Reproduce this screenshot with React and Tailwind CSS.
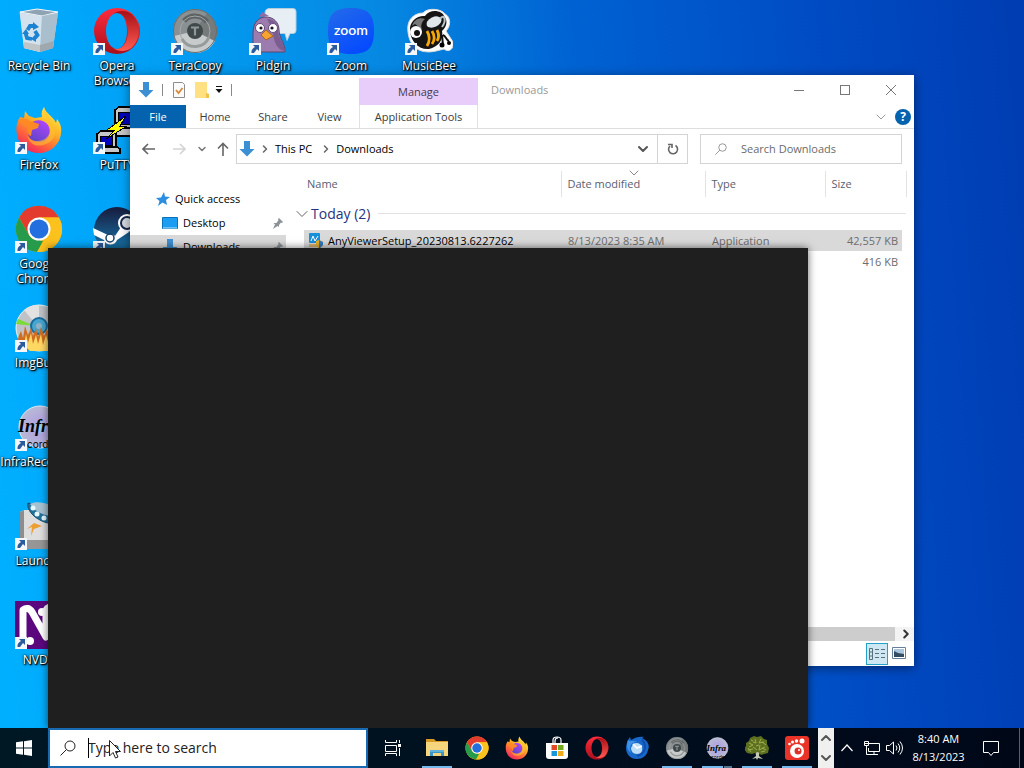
import { ChevronDown, ChevronRight, ChevronUp } from 'lucide-react';

/* ---------- App icons (48 x 48 grid) ---------- */

const RecycleBinIcon = () => (
  <svg viewBox="0 0 48 48" className="w-full h-full">
    <path d="M4.500 5 22 2 43 5 38 41 25 45 9 41Z" fill="#c3d3de" />
    <path d="M5 5 22 2 43 5 27 9Z" fill="#8fa4b3" stroke="#eef5f9" strokeWidth="1" />
    <path d="M5 6 27 9 25 45 9 41Z" fill="#d3e2ec" />
    <path d="M27 9 43 6 38 41 25 45Z" fill="#a9bfcd" />
    <path d="M9 35 25 38 25 45 9 41Z" fill="#c0c6c8" />
    <path d="M25 38 39 34 38 41 25 45Z" fill="#9fa8ae" />
    <g fill="none" stroke="#1b83d2" strokeWidth="3.800">
      <path d="M12.500 23 15 19 20 19" />
      <path d="M20 31 22.500 28 20 24" />
      <path d="M10.500 26 12 31 17 32" />
    </g>
    <g fill="#1b83d2">
      <path d="m18 15 6 5-6 3Z" />
      <path d="m21 27-5 5 5 3Z" />
      <path d="m7 27 4-5 3 5Z" />
    </g>
  </svg>
);

const OperaIcon = () => (
  <svg viewBox="0 0 48 48" className="w-full h-full">
    <defs>
      <linearGradient id="operaOuter" x1="0" y1="0" x2="0" y2="1">
        <stop offset="0" stopColor="#ff2b3c" />
        <stop offset="1" stopColor="#a90f1c" />
      </linearGradient>
      <linearGradient id="operaInner" x1="0" y1="0" x2="0" y2="1">
        <stop offset="0" stopColor="#a80f16" />
        <stop offset="1" stopColor="#ff5b52" />
      </linearGradient>
    </defs>
    <path fillRule="evenodd" fill="url(#operaOuter)" d="M24 1a23 23 0 1 0 0 46 23 23 0 0 0 0-46Zm0 5c6 0 10 8 10 18s-4 18-10 18-11-8-11-18S18 6 24 6Z" />
    <path fill="url(#operaInner)" d="M20 7C25 3 34 3 39 7.500a23 23 0 0 1 0 33C34 45 25 45 20 41c9 4 15-6 15-17S29 3 20 7Z" />
  </svg>
);

const TeraCopyIcon = () => (
  <svg viewBox="0 0 48 48" className="w-full h-full">
    <circle cx="24" cy="24" r="22" fill="#8b9092" />
    <path d="M24 24 3 29A22 22 0 0 0 44 34Z" fill="#c8cbcb" />
    <path d="M24 24 44 34A22 22 0 0 0 36 6Z" fill="#757a7b" />
    <circle cx="24" cy="24" r="21.500" fill="none" stroke="#676d6e" strokeWidth="1" />
    <path d="M13 14A15 15 0 0 1 36 15" fill="none" stroke="#5c6263" strokeWidth="5" />
    <circle cx="24" cy="24" r="15" fill="none" stroke="#a4a8a7" strokeWidth="1" />
    <path d="M11 32A15 15 0 0 0 38 30" fill="none" stroke="#969b9b" strokeWidth="3" />
    <circle cx="24" cy="24" r="8" fill="#404849" />
    <path d="M20 20.500h8M24 20.500v8" stroke="#8e9897" strokeWidth="2.200" />
  </svg>
);

const PidginIcon = () => (
  <svg viewBox="0 0 48 48" className="w-full h-full">
    <path d="M21 1.500h23q3 0 3 3v19q0 3-3 3h-3l-3 7-2-7H20q-4 0-4-4V6q0-4.500 5-4.500Z" fill="#e8eff4" stroke="#b6cddd" />
    <path d="M4 45V26C4 15 10 10 17 10s13 5 13 13c0 8 7 15 6 22Z" fill="#9c7cae" stroke="#61456f" />
    <path d="M18 12c8 0 11 5 11 12s8 14 6 20c-8-2-11-12-11-20Z" fill="#7b5d91" />
    <path d="m10 10 3-5 7 4Z" fill="#8f6da3" />
    <g fill="#fff" stroke="#674a79">
      <circle cx="11" cy="21" r="4.500" />
      <circle cx="24" cy="21" r="4.500" />
    </g>
    <circle cx="12" cy="21" r="1.600" fill="#1c1523" />
    <circle cx="23" cy="21" r="1.600" fill="#1c1523" />
    <path d="m17 23-5 5 5 5 7-4Z" fill="#f5a433" stroke="#a96516" />
  </svg>
);

const ZoomIcon = () => (
  <svg viewBox="0 0 48 48" className="w-full h-full">
    <defs>
      <linearGradient id="zoomBg" x1="0" y1="0" x2="0.600" y2="1">
        <stop offset="0" stopColor="#246be8" />
        <stop offset="1" stopColor="#064bff" />
      </linearGradient>
    </defs>
    <path d="M24 1C41 1 47 7 47 24S41 47 24 47 1 41 1 24 7 1 24 1Z" fill="url(#zoomBg)" />
    <text x="24" y="28" textAnchor="middle" fontSize="14" fontWeight="600" fill="#fff" fontFamily="Lato, sans-serif">zoom</text>
  </svg>
);

const MusicBeeIcon = () => (
  <svg viewBox="0 0 48 48" className="w-full h-full">
    <path d="M3 25C1 12 10 6 18 6 23 0 37 2 40 7c6 3 6 12 1 17l7 11c1 7-4 11-9 7l-8 2c-13 3-26-1-28-19Z" fill="#fff" stroke="#ddd" />
    <path d="M5 24C4 14 13 8 20 9c5-8 18-5 19 0 4 4 3 11-2 15 2 9-4 16-13 18-10 1-18-7-19-18Z" fill="#151515" />
    <path d="M7 19C9 12 15 10 20 12c-4 3-5 9-2 11L10 17Z" fill="#777" />
    <g stroke="#f8a806" strokeWidth="2.800" fill="none">
      <path d="M22 24c3 5 3 10 0 15" />
      <path d="M27 24c3 5 3 9 0 13" />
      <path d="M32 23c2 4 2 8 0 11" />
    </g>
    <ellipse cx="29" cy="15" rx="8" ry="5" transform="rotate(-25 29 15)" fill="#dfe7eb" />
    <path d="M35 12c4-6 7 1 2 8" fill="none" stroke="#bac4c8" strokeWidth="2" />
    <circle cx="11" cy="25" r="6" fill="#fff" />
    <circle cx="12" cy="26" r="3" fill="#111" />
    <path d="m37 28 1 10M38 28c3 1 3 5 6 6" stroke="#111" strokeWidth="2" fill="none" />
    <circle cx="37" cy="38" r="2.500" />
    <circle cx="44" cy="36" r="2" />
  </svg>
);

const FirefoxIcon = () => (
  <svg viewBox="0 0 48 48" className="w-full h-full">
    <defs>
      <linearGradient id="foxBody" x1="0.800" y1="0" x2="0.200" y2="1">
        <stop offset="0" stopColor="#fff34a" />
        <stop offset="0.400" stopColor="#ffae24" />
        <stop offset="0.700" stopColor="#ff613c" />
        <stop offset="1" stopColor="#ed1b68" />
      </linearGradient>
      <linearGradient id="foxGlobe" x1="0.800" y1="0" x2="0.200" y2="1">
        <stop offset="0" stopColor="#b244ff" />
        <stop offset="1" stopColor="#5b46c4" />
      </linearGradient>
    </defs>
    <path d="M29 1c-2 3-3 6-2 10l-7 1-6-2-4-5-1 7-4-1C1 17 1 23 2 29c2 11 11 18 22 18s21-8 22-20c1-6-1-10-4-14l-1 4C38 10 31 8 29 1Z" fill="url(#foxBody)" />
    <path d="M15 18c5-6 16-5 19 3 3 9-3 15-10 15s-12-5-11-12l5-3Z" fill="url(#foxGlobe)" />
    <path d="M4 12c4 2 7 0 11 3l9 3-1 4-6 2-1 6c-4-1-4-6-2-9C9 17 6 20 4 12Z" fill="#ff8a24" />
    <path d="M29 1c-2 9 8 13 6 24-1 6-6 10-13 10-5 0-8-2-10-6 2 9 9 12 16 10 9-2 15-10 11-20C37 11 31 9 29 1Z" fill="#ffc232" opacity="0.600" />
  </svg>
);

const PuttyIcon = () => (
  <svg viewBox="0 0 48 48" className="w-full h-full" shapeRendering="crispEdges">
    <g fill="#c7c7c7" stroke="#000" strokeWidth="1.500">
      <path d="M22 4 26 1h20v17l-4 4H22Z" />
      <path d="M19 22h25l3 3v5H19Z" />
      <path d="m4 28 4-3h15v15l-3 3H4Z" />
      <path d="M2 41h22l3 2v4H2Z" />
    </g>
    <g fill="#0000bd" stroke="#000">
      <path d="M25 6h16v12H25Z" />
      <path d="M7 30h12v9H7Z" />
    </g>
    <path d="m33 10-19 14h8l-9 9 21-13h-7Z" fill="#ff0" stroke="#000" strokeWidth="1" />
  </svg>
);

const ChromeIcon = () => (
  <svg viewBox="0 0 48 48" className="w-full h-full">
    <circle cx="24" cy="24" r="23" fill="#fbbd13" />
    <path d="M4 12.500A23 23 0 0 1 44 12.500H24L14 30Z" fill="#e33b2e" />
    <path d="M4 12.500 14 30q4 6 10 5l4 1-6 11A23 23 0 0 1 4 12.500Z" fill="#269b4b" />
    <path d="M24 12.500h20A23 23 0 0 1 22 47l12-17q5-11-10-17.500Z" fill="#fbc11d" />
    <circle cx="24" cy="24" r="11.500" fill="#fff" />
    <circle cx="24" cy="24" r="9.500" fill="#246fe0" />
  </svg>
);

const SteamIcon = () => (
  <svg viewBox="0 0 48 48" className="w-full h-full">
    <defs>
      <linearGradient id="steamBg" x1="0" y1="0" x2="0" y2="1">
        <stop offset="0" stopColor="#171b3d" />
        <stop offset="1" stopColor="#177eb5" />
      </linearGradient>
    </defs>
    <circle cx="24" cy="25" r="23" fill="url(#steamBg)" />
    <path d="m0 23 15 7c3-1 5-1 7 1l6-9 8 5-12 8c-2 6-11 6-13 0L1 30Z" fill="#fff" />
    <circle cx="34" cy="18" r="9" fill="#fff" />
    <circle cx="34" cy="18" r="6" fill="#d8dce2" stroke="#17274d" strokeWidth="2" />
    <circle cx="17" cy="33" r="4" fill="none" stroke="#17416a" strokeWidth="1.500" />
  </svg>
);

const ImgBurnIcon = () => (
  <svg viewBox="0 0 48 48" className="w-full h-full">
    <circle cx="24" cy="24" r="23" fill="#bfc3c7" stroke="#f3f3f3" />
    <path d="M24 24 9 6A23 23 0 0 1 24 1Z" fill="#e2e2e2" />
    <path d="M20 22 1 20a23 23 0 0 1 2-5Z" fill="#7bdb37" />
    <circle cx="24" cy="22" r="8" fill="#47a5d0" stroke="#176b9d" strokeWidth="2" />
    <circle cx="24" cy="22" r="3" fill="#8db4c6" />
    <path d="M3 38c0-7 2-8 3-11l2 7 2-12 3 9 3-7 2 8 3-8 2 9 3-10 3 9 3-7 3 7 3-8 3 8 4-6v11Q34 47 24 47 10 48 3 38Z" fill="#cf6c20" />
    <path d="m9 41 2-11 2 9 3-10 2 11 3-9 2 9 3-10 2 11 3-10 3 10 3-8 3 8-7 6H15Z" fill="#ffd864" />
  </svg>
);

const InfraIcon = () => (
  <svg viewBox="0 0 48 48" className="w-full h-full">
    <defs>
      <radialGradient id="infraDisc">
        <stop offset="0" stopColor="#85e1f2" />
        <stop offset="0.350" stopColor="#b2a6df" />
        <stop offset="1" stopColor="#b8bad5" />
      </radialGradient>
    </defs>
    <circle cx="25" cy="24" r="21" fill="url(#infraDisc)" stroke="#e4e4ef" />
    <text x="3" y="29" fontSize="18" fontStyle="italic" fontWeight="700" fontFamily="'Liberation Serif', serif">Infra</text>
    <text x="12" y="45" fontSize="10" fontFamily="Inter, sans-serif">corder</text>
  </svg>
);

const LaunchyIcon = () => (
  <svg viewBox="0 0 48 48" className="w-full h-full">
    <path d="M5 10 9 8h39v30H5Z" fill="#dedede" />
    <path d="M5 10 9 8v30l-4 4Z" fill="#8d8d8d" />
    <path d="M5 38h43v9H5Z" fill="#969696" />
    <path d="M13 1c-2 9 12 23 34 21V12Z" fill="#23719b" stroke="#164c6b" />
    <path d="M15 2C22-3 44 3 44 13 31 16 20 10 15 2Z" fill="#a7c3d1" />
    <g fill="#e7fbff">
      <circle cx="18" cy="6" r="2.500" />
      <circle cx="22" cy="12" r="2.500" />
      <circle cx="29" cy="16" r="2.500" />
    </g>
    <path d="m19 21 8 3-8 3-3 7 1-9-5 2Z" fill="#ec9f32" />
  </svg>
);

const NvdaIcon = () => (
  <svg viewBox="0 0 48 48" className="w-full h-full">
    <path d="M0 0h48v48H0Z" fill="#5b087f" />
    <path d="M8 43V9q5-4 9 2l14 25V11q0-5 6-5" fill="none" stroke="#fff" strokeWidth="7" strokeLinecap="round" strokeLinejoin="round" />
    <circle cx="27" cy="11" r="4" fill="#fff" />
    <circle cx="15" cy="40" r="4" fill="#fff" />
  </svg>
);

const FolderIcon = () => (
  <svg viewBox="0 0 24 24" className="w-full h-full">
    <path d="M1 3h8l2 2h12v4H1Z" fill="#d79b24" />
    <path d="M1 6h22v14H1Z" fill="#f5d67c" />
    <path d="M5 14h14v6h-3v-3H8v3H5Z" fill="#3d94c9" />
    <path d="M5 14h14v2H5Z" fill="#62b2d9" />
  </svg>
);

const StoreIcon = () => (
  <svg viewBox="0 0 24 24" className="w-full h-full">
    <path d="M8 7V4q0-3 4-3t4 3v3M10 7V5q0-3 3-3" fill="none" stroke="#fff" strokeWidth="1.200" />
    <path d="M1 7h22v13q0 3-3 3H4q-3 0-3-3Z" fill="#fff" />
    <path d="M6.500 9H12v5H6.500Z" fill="#e04a28" />
    <path d="M13 9h5.500v5H13Z" fill="#73a91e" />
    <path d="M6.500 15H12v5H6.500Z" fill="#1597d8" />
    <path d="M13 15h5.500v5H13Z" fill="#f2ac18" />
  </svg>
);

const ThunderbirdIcon = () => (
  <svg viewBox="0 0 24 24" className="w-full h-full">
    <path d="M3 4 5 1l1 3c4-3 10-4 13-3l-2 1c6 3 8 7 6 12-1 6-6 9-11 9C5 23 1 18 1 12c0-3 1-5 2-8Z" fill="#1868cb" />
    <path d="M3 4c2 2 6 0 9 2-7 0-8 6-6 11C2 14 1 9 3 4Z" fill="#3f93e6" />
    <path d="M8 8c3-2 8-1 9 3s-1 7-5 7-6-3-6-6Z" fill="#bcdcf8" />
    <path d="m8 8 4 4 5-2" fill="none" stroke="#fff" strokeWidth="1.500" />
    <path d="M17 4c5 5 4 14-5 16" fill="none" stroke="#0f4eac" strokeWidth="2" />
  </svg>
);

const TreeIcon = () => (
  <svg viewBox="0 0 24 24" className="w-full h-full">
    <path d="m10 12 1 8-4 3 4-1 1 2 1-2 5 1-4-3 1-8Z" fill="#c4c9b6" />
    <path d="M5 2 9 0l3 1 4-1 3 3 3 1v4l2 4-1 5-4 1-3 1-3-3-3 1-3 1-5-1-3-4 2-3L1 7l3-2Z" fill="#5d7020" />
    <path d="m4 7 4 2-4 2m6-8 1 4-3-1m8-3-2 4 5-1M8 11l4 3m3-5-1 5 6-3M3 14l5-1m8 3 4-1m-9-5 3-1M6 4l2 1m-5 7 3 4m11-4 4 2M17 6l4 3" fill="none" stroke="#a0ad4f" />
  </svg>
);

const GomIcon = () => (
  <svg viewBox="0 0 24 24" className="w-full h-full">
    <rect width="24" height="24" rx="3" fill="#e93329" />
    <g fill="#fff">
      <circle cx="12" cy="15" r="7" />
      <circle cx="4.500" cy="8" r="1.300" />
      <circle cx="7.500" cy="6" r="1.500" />
      <circle cx="11.500" cy="5" r="1.700" />
      <circle cx="17" cy="5" r="2.500" />
    </g>
    <circle cx="13" cy="15" r="3.500" fill="#dd3028" />
    <circle cx="14" cy="14" r="1" fill="#fff" />
  </svg>
);

const DownArrow = () => (
  <svg viewBox="0 0 16 16" className="w-4 h-4 shrink-0">
    <path d="M5 0h6v8h4.500L8 15.500.500 8H5Z" fill="#3c8fd3" />
  </svg>
);

const PinIcon = () => (
  <svg viewBox="0 0 12 12" className="w-3 h-3 shrink-0">
    <path d="m7 1 4 4-1 1-1-.500L7 8v2L5.500 9 1 12 3 7.500 1.500 6h3L6.500 3 6 2Z" fill="#8b9298" />
  </svg>
);

const SearchIcon = ({ className }) => (
  <svg viewBox="0 0 16 16" className={className} fill="none" stroke="currentColor">
    <circle cx="10" cy="6" r="5" />
    <path d="M6.500 9.500.500 15.500" />
  </svg>
);

/* ---------- Desktop ---------- */

const desktopColumns = [
  [
    { label: 'Recycle Bin', Icon: RecycleBinIcon, system: true },
    { label: 'Firefox', Icon: FirefoxIcon },
    { label: 'Google Chrome', Icon: ChromeIcon },
    { label: 'ImgBurn', Icon: ImgBurnIcon },
    { label: 'InfraRecorder', Icon: InfraIcon },
    { label: 'Launchy', Icon: LaunchyIcon },
    { label: 'NVDA', Icon: NvdaIcon },
  ],
  [
    { label: 'Opera Browser', Icon: OperaIcon },
    { label: 'PuTTY', Icon: PuttyIcon },
    { label: 'Steam', Icon: SteamIcon },
  ],
  [{ label: 'TeraCopy', Icon: TeraCopyIcon }],
  [{ label: 'Pidgin', Icon: PidginIcon }],
  [{ label: 'Zoom', Icon: ZoomIcon }],
  [{ label: 'MusicBee', Icon: MusicBeeIcon }],
];

const DesktopIcon = ({ label, Icon, system }) => (
  <button className="w-[78px] h-[99px] pt-[7px] flex flex-col items-center gap-[3px] shrink-0">
    <span className="relative w-12 h-12 block">
      <Icon />
      {!system && (
        <svg viewBox="0 0 12 12" className="absolute left-0 bottom-0 w-3 h-3">
          <path d="M0 0h12v12H0Z" fill="#f4f7fa" />
          <path d="M4 2h6v6L8 6 5 10H2.500C2 7 4 5 6 4Z" fill="#2c5a9e" />
        </svg>
      )}
    </span>
    <span className="text-white text-xs leading-[15px] text-center [text-shadow:1px_1px_1px_#000,1px_1px_3px_#000,0_0_2px_#000]">{label}</span>
  </button>
);

/* ---------- Explorer window ---------- */

const TitleBar = () => (
  <div className="flex h-[30px] items-stretch">
    <div className="flex w-[229px] items-center pl-2">
      <DownArrow />
      <span className="ml-2 h-3 w-px bg-[#8a8a8a]" />
      <button aria-label="Properties" className="ml-2">
        <svg viewBox="0 0 16 16" className="w-4 h-4">
          <path d="M2.500.500h9l2 2v13h-11Z" fill="#fbfbfb" stroke="#8d8d8d" />
          <path d="m5 8 2.500 3 4-5" fill="none" stroke="#d88a3b" strokeWidth="1.800" />
        </svg>
      </button>
      <button aria-label="New folder" className="ml-2">
        <svg viewBox="0 0 14 16" className="w-3.5 h-4">
          <path d="M0 0h12v11l2 1v4H0Z" fill="#ffe082" />
          <path d="M11 11v5h3v-4Z" fill="#f1c34c" />
        </svg>
      </button>
      <button aria-label="Customize toolbar" className="ml-[6px]">
        <svg viewBox="0 0 8 8" className="w-2 h-2">
          <path d="M1 0h6v1H1ZM.500 3h7L4 7Z" fill="#111" />
        </svg>
      </button>
      <span className="ml-2 h-3 w-px bg-[#8a8a8a]" />
    </div>
    <div className="mt-[3px] flex w-[119px] items-center justify-center bg-[#e8cdfa] text-[#443a4d]">Manage</div>
    <h1 className="flex flex-1 items-center pl-[13px] text-[#999]">Downloads</h1>
    <button aria-label="Minimize" className="flex w-[46px] items-center justify-center">
      <span className="h-px w-2.5 bg-[#777]" />
    </button>
    <button aria-label="Maximize" className="flex w-[46px] items-center justify-center">
      <span className="h-2.5 w-2.5 border border-[#777]" />
    </button>
    <button aria-label="Close" className="flex w-[46px] items-center justify-center">
      <svg viewBox="0 0 12 12" className="w-3 h-3" stroke="#777">
        <path d="m1 1 10 10M11 1 1 11" />
      </svg>
    </button>
  </div>
);

const RibbonTabs = () => (
  <div className="flex h-6 border-b border-[#dedede] text-[#3c3c3c]">
    <button className="w-14 bg-[#0562ae] text-white">File</button>
    <button className="w-[58px]">Home</button>
    <button className="w-[58px]">Share</button>
    <button className="w-[57px] pr-[2px]">View</button>
    <button className="w-[119px] border-x border-[#ead9f2] whitespace-nowrap">Application Tools</button>
    <div className="flex flex-1 items-center justify-end gap-[6px] pr-[3px]">
      <button aria-label="Expand the ribbon">
        <ChevronDown className="w-4 h-4 text-[#9a9a9a]" strokeWidth={1.5} />
      </button>
      <button aria-label="Help" className="h-4 w-4 rounded-full bg-[#0562ae] text-xs leading-4 font-bold text-white">?</button>
    </div>
  </div>
);

const AddressBar = () => (
  <div className="flex items-center pt-[5px] pr-3 pb-[5px]">
    <div className="flex w-[106px] items-center pl-3">
      <button aria-label="Back">
        <svg viewBox="0 0 14 12" className="w-3.5 h-3" fill="none" stroke="#666" strokeWidth="1.600">
          <path d="M13 6H1.500M6 1 1 6l5 5" />
        </svg>
      </button>
      <button aria-label="Forward" className="ml-4">
        <svg viewBox="0 0 14 12" className="w-3.5 h-3" fill="none" stroke="#d4d4d4" strokeWidth="1.600">
          <path d="M1 6h11.500M8 1l5 5-5 5" />
        </svg>
      </button>
      <button aria-label="Recent locations" className="ml-[10px]">
        <ChevronDown className="w-3 h-3 text-[#777]" strokeWidth={3} />
      </button>
      <button aria-label="Up" className="ml-[9px]">
        <svg viewBox="0 0 12 14" className="w-3 h-3.5" fill="none" stroke="#666" strokeWidth="1.600">
          <path d="M6 14V1.500M1 6.500l5-5 5 5" />
        </svg>
      </button>
    </div>
    <div className="flex h-[30px] flex-1 items-center border border-[#d4d4d4] pl-[2px] text-black">
      <DownArrow />
      <ChevronRight className="ml-1 w-3 h-3 text-[#666]" strokeWidth={3} />
      <button className="mx-1">This PC</button>
      <ChevronRight className="ml-1 w-3 h-3 text-[#666]" strokeWidth={3} />
      <button className="mx-1">Downloads</button>
      <button aria-label="Previous locations" className="ml-auto mr-[6px]">
        <ChevronDown className="w-4 h-4 text-[#555]" strokeWidth={3} />
      </button>
      <button aria-label="Refresh" className="flex h-full w-[30px] items-center justify-center border-l border-[#d4d4d4]">
        <svg viewBox="0 0 12 12" className="w-3 h-3" fill="none" stroke="#666" strokeWidth="1.600">
          <path d="M8.500 2.500A4.500 4.500 0 1 1 3 3" />
          <path d="M1 1.500h4V5" />
        </svg>
      </button>
    </div>
    <label className="ml-3 flex h-[30px] w-[202px] items-center border border-[#d4d4d4] pl-[14px]">
      <SearchIcon className="w-3 h-3 shrink-0 text-[#777]" />
      <input
        aria-label="Search Downloads"
        placeholder="Search Downloads"
        className="ml-[14px] min-w-0 flex-1 outline-none placeholder:text-[#6b6b6b]"
      />
    </label>
  </div>
);

const NavPane = () => (
  <nav className="w-[157px] shrink-0 pt-4 text-black">
    <a href="#quick" className="flex h-6 items-center gap-[5px] pl-[26px]">
      <svg viewBox="0 0 14 14" className="w-3.5 h-3.5">
        <path d="m8 0 1 4.500 5 .500-4 3 1 5-4.500-2.500L2 14l1.500-5L0 6l5-.500Z" fill="#2b8ee0" />
      </svg>
      Quick access
    </a>
    <a href="#desktop" className="flex h-6 items-center gap-[5px] pr-[3px] pl-8">
      <svg viewBox="0 0 16 12" className="w-4 h-3">
        <path d="M.500.500h15v11H.500Z" fill="#1c9df2" stroke="#0873bc" />
        <path d="M1 11h14" stroke="#b8e2ff" />
      </svg>
      <span className="flex-1">Desktop</span>
      <PinIcon />
    </a>
    <a href="#downloads" className="mr-px flex h-6 items-center gap-[5px] bg-[#d9d9d9] pr-[2px] pl-8">
      <DownArrow />
      <span className="flex-1">Downloads</span>
      <PinIcon />
    </a>
  </nav>
);

const files = [
  { name: 'AnyViewerSetup_20230813.6227262', date: '8/13/2023 8:35 AM', type: 'Application', size: '42,557 KB', selected: true },
  { name: '', date: '', type: '', size: '416 KB' },
];

const FileList = () => (
  <div className="flex-1 pl-[17px]">
    <table className="w-[602px] table-fixed border-collapse text-[#6d6d6d]">
      <colgroup>
        <col className="w-[257px]" />
        <col className="w-[144px]" />
        <col className="w-[120px]" />
        <col className="w-[77px]" />
        <col className="w-1" />
      </colgroup>
      <thead>
        <tr className="h-[26px] text-left text-[#5a6070]">
          <th className="pl-[3px] font-normal">Name</th>
          <th className="relative border-l border-[#e3e3e3] pl-[6px] font-normal">
            Date modified
            <ChevronDown className="absolute top-[-6px] left-16 w-4 h-4 text-[#888]" strokeWidth={1.5} />
          </th>
          <th className="border-l border-[#e3e3e3] pl-[6px] font-normal">Type</th>
          <th className="border-l border-[#e3e3e3] pl-[6px] font-normal">Size</th>
          <td className="border-r border-[#e3e3e3]" />
        </tr>
      </thead>
      <tbody>
        <tr className="h-[33px]">
          <th colSpan={5} className="p-0 text-left font-normal">
            <button className="flex w-full items-center text-sm text-[#263282]">
              <ChevronDown className="-ml-3 -mr-px w-5 h-5 text-[#666]" strokeWidth={1.2} />
              Today (2)
              <span className="ml-2 h-px flex-1 bg-[#e2e2e2]" />
            </button>
          </th>
        </tr>
        {files.map((file) => (
          <tr key={file.size} className="h-[21px]">
            <td className={file.selected ? 'bg-[#d9d9d9] p-0 text-black' : 'p-0'}>
              {file.name && (
                <div className="flex items-center gap-1 pl-1 whitespace-nowrap">
                  <svg viewBox="0 0 16 16" className="w-4 h-4 shrink-0">
                    <rect x="1" width="11" height="10" rx="1" fill="#168fdd" />
                    <path d="m3 8 2-5 2 5 3-5" fill="none" stroke="#fff" />
                    <path d="M1 11h10v3H1Z" fill="#d8b46c" />
                    <path d="m8 8 3-1 4 2v3l-4 4-3-4Z" fill="#e9af27" />
                    <path d="M11 7v9l4-4V9Z" fill="#3279bd" />
                  </svg>
                  {file.name}
                </div>
              )}
            </td>
            <td className={file.selected ? 'bg-[#d9d9d9] py-0 pl-[7px]' : 'py-0 pl-[7px]'}>{file.date}</td>
            <td className={file.selected ? 'bg-[#d9d9d9] py-0 pl-[7px]' : 'py-0 pl-[7px]'}>{file.type}</td>
            <td className={file.selected ? 'bg-[#d9d9d9] py-0 pr-1 text-right' : 'py-0 pr-1 text-right'}>{file.size}</td>
            <td />
          </tr>
        ))}
      </tbody>
    </table>
  </div>
);

const ExplorerWindow = () => (
  <section className="absolute top-[75px] left-[130px] flex h-[591px] w-[784px] flex-col bg-white text-[11px] leading-4 shadow-[0_2px_10px_rgba(0,0,0,0.45)]">
    <TitleBar />
    <RibbonTabs />
    <AddressBar />
    <div className="flex min-h-0 flex-1 pt-[2px]">
      <NavPane />
      <FileList />
    </div>
    <div className="flex h-[14px] items-center bg-[#f3f3f3] pl-[174px]">
      <div className="h-full flex-1 bg-[#cdcdcd]" />
      <button aria-label="Scroll right" className="flex w-[19px] justify-center">
        <ChevronRight className="ml-[2px] w-3.5 h-3.5 text-[#333]" strokeWidth={3.5} />
      </button>
    </div>
    <div className="flex h-[25px] items-start justify-end gap-1 pr-2 pt-[2px]">
      <button aria-label="Details view" className="flex h-[22px] w-[22px] items-center justify-center border border-[#26a0c8] bg-[#cde8f2]">
        <svg viewBox="0 0 18 14" className="w-[18px] h-3.5" fill="none" stroke="#5b707c">
          <path d="M1.500 1.500h3v11h-3ZM1 5h4M1 9h4" />
          <path d="M7 2.500h4m2 0h4M7 6.500h4m2 0h4M7 10.500h4m2 0h4" />
        </svg>
      </button>
      <button aria-label="Large icons view" className="mt-1 h-3">
        <svg viewBox="0 0 14 12" className="w-3.5 h-3">
          <path d="M.500.500h13v11H.500Z" fill="#fff" stroke="#667f9a" />
          <path d="M2 2h10v8H2Z" fill="#a9c6df" />
          <path d="m2 4 4 2 6 1v3H2Z" fill="#324c62" />
        </svg>
      </button>
    </div>
  </section>
);

/* ---------- Taskbar ---------- */

const pinnedApps = [
  { name: 'File Explorer', Icon: FolderIcon, running: true },
  { name: 'Chrome', Icon: ChromeIcon },
  { name: 'Firefox', Icon: FirefoxIcon },
  { name: 'Microsoft Store', Icon: StoreIcon },
  { name: 'Opera', Icon: OperaIcon },
  { name: 'Thunderbird', Icon: ThunderbirdIcon },
  { name: 'TeraCopy', Icon: TeraCopyIcon, running: true },
  { name: 'InfraRecorder', Icon: InfraIcon, running: true, stacked: true },
  { name: 'TreeSize', Icon: TreeIcon, running: true },
  { name: 'GOM Player', Icon: GomIcon, running: true },
];

const Taskbar = () => (
  <footer className="relative flex h-10 shrink-0 bg-linear-to-r from-[#001724] to-[#000818] text-white">
    <button aria-label="Start" className="flex w-12 items-center justify-center">
      <svg viewBox="0 0 16 16" className="w-4 h-4" fill="#fff">
        <path d="M0 2.300 7 1.300v6.200H0ZM8 1.200 16 0v7.500H8ZM0 8.500h7v6.200l-7-1ZM8 8.500h8V16l-8-1.200Z" />
      </svg>
    </button>
    <label className="relative flex w-80 items-center border-2 border-[#1769b0] bg-white pl-[10px] text-black">
      <SearchIcon className="w-4 h-4 shrink-0 text-[#222]" />
      <input
        aria-label="Type here to search"
        placeholder="Type here to search"
        className="ml-3 min-w-0 flex-1 text-sm outline-none placeholder:text-[#222]"
      />
      <span className="absolute left-[38px] top-2 h-5 w-px bg-black" />
      <svg viewBox="0 0 12 19" className="absolute top-[10px] left-[59px] h-[19px] w-3">
        <path d="M.500.500v15.500L4 12.500l2.500 5.500 2.500-1-2.500-5.500h5Z" fill="#fff" stroke="#222" />
      </svg>
    </label>
    <button aria-label="Task View" className="flex w-[49px] items-center justify-center">
      <svg viewBox="0 0 16 16" className="w-4 h-4" fill="none" stroke="#fff">
        <path d="M.500 0v2.500h11V0M.500 5.500h11v6H.500ZM.500 16v-2.500h11V16M14.500 0v3M14.500 8v8" />
        <path d="M13 4h3v3h-3Z" fill="#fff" stroke="none" />
      </svg>
    </button>
    {pinnedApps.map(({ name, Icon, running, stacked }) => (
      <button key={name} aria-label={name} className="relative flex w-10 items-center justify-center">
        <span className="h-6 w-6">
          <Icon />
        </span>
        {running && (
          <span className="absolute bottom-0 left-[5px] flex h-[2px] w-[30px] gap-px">
            <span className="flex-1 bg-[#76b9ed]" />
            {stacked && <span className="w-2 bg-[#56768d]" />}
          </span>
        )}
      </button>
    ))}
    <div className="ml-px flex w-4 flex-col items-center justify-between bg-[#f0f0f0] py-[2px] text-[#555]">
      <ChevronUp className="w-4 h-4" strokeWidth={3} />
      <ChevronDown className="w-4 h-4" strokeWidth={3} />
    </div>
    <div className="ml-auto flex items-center">
      <button aria-label="Show hidden icons" className="flex w-[26px] justify-center">
        <svg viewBox="0 0 12 8" className="w-3 h-2" fill="none" stroke="#fff" strokeWidth="1.200">
          <path d="m.500 7 5.500-6 5.500 6" />
        </svg>
      </button>
      <button aria-label="Network" className="flex w-[23px] justify-center">
        <svg viewBox="0 0 18 16" className="w-[18px] h-4" fill="none" stroke="#fff">
          <path d="M6 3.500h10.500v8H5.500V8M11 11.500v3M7 14.500h8M1.500 1.500h4v4h-4ZM3.500 5.500v9H7M2 3.500h3" />
        </svg>
      </button>
      <button aria-label="Volume" className="flex w-6 justify-center">
        <svg viewBox="0 0 18 14" className="w-[18px] h-3.5" fill="none" stroke="#fff">
          <path d="M.500 4.500h3l4-3.500v12l-4-3.500h-3ZM10 4.500q2 2.500 0 5M12 2.500q3.500 4.500 0 9M14 .500q5 6.500 0 13" />
        </svg>
      </button>
      <button className="w-[63px] text-center text-[11px] leading-[18px]">
        <time dateTime="2023-08-13T08:40">
          8:40 AM
          <br />
          8/13/2023
        </time>
      </button>
      <button aria-label="Notifications" className="flex w-[42px] justify-center">
        <svg viewBox="0 0 18 18" className="w-[18px] h-[18px]" fill="none" stroke="#fff">
          <path d="M1.500 2.500h15v11h-5L9 16.500l-2.500-3h-5Z" />
        </svg>
      </button>
      <button aria-label="Show desktop" className="ml-[7px] h-10 w-[5px] border-l border-[#526071]" />
    </div>
  </footer>
);

export default function App() {
  return (
    <div className="flex h-screen w-full flex-col overflow-hidden bg-black font-['Open_Sans','Noto_Sans',sans-serif]">
      <main className="relative min-h-0 flex-1 bg-[linear-gradient(86deg,#00b0ff_0%,#00a6fa_12%,#0688e2_40%,#0062d2_58%,#004cc4_80%,#003cb2_100%)]">
        <div className="flex">
          {desktopColumns.map((column) => (
            <div key={column[0].label} className="flex flex-col">
              {column.map((item) => (
                <DesktopIcon key={item.label} {...item} />
              ))}
            </div>
          ))}
        </div>
        <ExplorerWindow />
        {/* Search flyout, still blank while it loads */}
        <aside className="absolute bottom-0 left-12 h-[480px] w-[760px] bg-[#1f1f1f] shadow-[0_0_8px_rgba(0,0,0,0.6)]" />
      </main>
      <Taskbar />
    </div>
  );
}
